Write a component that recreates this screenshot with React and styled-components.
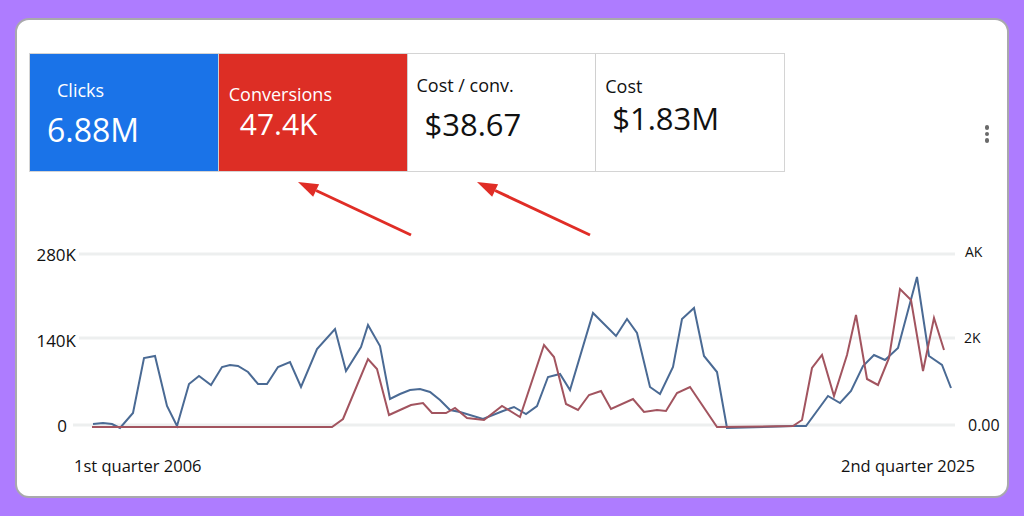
import React from "react"
import styled, { createGlobalStyle } from "styled-components"

const GlobalStyle = createGlobalStyle`
  html, body {
    margin: 0;
    padding: 0;
    background: #ae7cff;
  }
  body {
    font-family: "Open Sans", "Noto Sans", sans-serif;
    color: #111;
  }
`

const tiles = [
  { label: "Clicks", value: "6.88M", bg: "#1a73e8", fg: "#fff", labelTop: 24, labelLeft: 27, valueTop: 8, valueLeft: 17, valueSize: 32 },
  { label: "Conversions", value: "47.4K", bg: "#dd2e25", fg: "#fff", labelTop: 28, labelLeft: 10, valueTop: -2, valueLeft: 21, valueSize: 30 },
  { label: "Cost / conv.", value: "$38.67", bg: "#fff", fg: "#111", labelTop: 19, labelLeft: 9, valueTop: 7, valueLeft: 17, valueSize: 31 },
  { label: "Cost", value: "$1.83M", bg: "#fff", fg: "#111", labelTop: 20, labelLeft: 9, valueTop: 0, valueLeft: 16, valueSize: 31 },
]

const blue = "93,424 103,423 112,424 120,428 133,413 144,358 155,356 167,406 177,426 189,384 199,376 211,385 222,367 230,365 238,366 248,372 258,384 267,384 278,367 290,362 301,387 317,349 335,329 346,371 361,347 368,325 380,346 390,399 400,394 410,390 420,389 430,392 440,400 450,410 460,412 483,419 503,411 514,407 526,414 537,406 548,377 560,374 570,390 593,313 616,336 627,319 637,333 650,387 660,394 673,367 682,319 694,308 704,356 717,372 727,428 793,426 806,426 828,396 840,403 851,391 863,366 874,355 885,360 898,348 917,277 929,356 942,365 951,388"
const red = "92,427 332,427 343,419 368,359 377,369 389,415 400,410 411,405 423,403 432,413 446,413 455,408 467,418 484,420 502,406 520,417 544,345 554,357 566,404 578,410 589,395 601,391 611,409 633,399 644,412 657,410 666,411 677,393 690,387 717,427 793,426 802,420 812,368 822,355 834,396 847,355 856,315 867,379 878,385 889,358 900,289 911,300 923,371 934,318 944,350"

const gridLines = [
  { y: 254, x1: 79 },
  { y: 338, x1: 79 },
  { y: 425, x1: 73 },
]

const Page = styled.div`
  box-sizing: border-box;
  width: 1024px;
  height: 516px;
  padding: 18px 15px;
  overflow: hidden;
`

const Card = styled.div`
  position: relative;
  box-sizing: border-box;
  height: 480px;
  background: #fff;
  border: 2px solid #a9a9ad;
  border-radius: 14px;
`

const TopRow = styled.div`
  display: flex;
  align-items: center;
  justify-content: space-between;
  padding: 33px 18px 0 12px;
`

const Strip = styled.div`
  display: flex;
  width: 756px;
  height: 119px;
  box-sizing: border-box;
  border: 1px solid #d4d4d4;
`

const Tile = styled.div`
  flex: 1;
  box-sizing: border-box;
  background: ${p => p.$bg};
  color: ${p => p.$fg};
  & + & {
    border-left: 1px solid #d0d0d0;
  }
`

const Label = styled.div`
  margin: ${p => p.$top}px 0 0 ${p => p.$left}px;
  font-size: 18px;
  line-height: 24px;
`

const Value = styled.div`
  margin: ${p => p.$top}px 0 0 ${p => p.$left}px;
  font-size: ${p => p.$size}px;
  line-height: 40px;
`

const Kebab = styled.div`
  display: flex;
  flex-direction: column;
  gap: 2px;
  margin-top: 43px;
  span {
    width: 4.5px;
    height: 4.5px;
    border-radius: 50%;
    background: #6a6a6a;
  }
`

const Chart = styled.svg`
  display: block;
  margin-top: 18px;
  width: 990px;
  height: 300px;
  text {
    font-family: "Open Sans", "Noto Sans", sans-serif;
    fill: #111;
  }
`

const Notes = styled.svg`
  position: absolute;
  left: 0;
  top: 0;
  width: 990px;
  height: 240px;
  pointer-events: none;
`

const Arrow = ({ tipX, tipY, endX, endY }) => {
  const a = Math.atan2(endY - tipY, endX - tipX)
  const l = 20, w = 7
  const bx = tipX + Math.cos(a) * l, by = tipY + Math.sin(a) * l
  const nx = -Math.sin(a) * w, ny = Math.cos(a) * w
  return (
    <g>
      <line x1={ bx } y1={ by } x2={ endX } y2={ endY } stroke="#e02d26" strokeWidth="3"/>
      <polygon points={ `${ tipX },${ tipY } ${ bx + nx },${ by + ny } ${ bx - nx },${ by - ny }` } fill="#e02d26"/>
    </g>
  )
}

const App = () => {
  return (
    <Page>
      <GlobalStyle/>
      <Card>
        <TopRow>
          <Strip>
            { tiles.map(t => (
                <Tile key={ t.label } $bg={ t.bg } $fg={ t.fg }>
                  <Label $top={ t.labelTop } $left={ t.labelLeft }>{ t.label }</Label>
                  <Value $top={ t.valueTop } $left={ t.valueLeft } $size={ t.valueSize }>{ t.value }</Value>
                </Tile>
              ))
            }
          </Strip>
          <Kebab><span/><span/><span/></Kebab>
        </TopRow>

        <Chart viewBox="17 190 990 300">
          { gridLines.map(g => (
              <line key={ g.y } x1={ g.x1 } x2="955" y1={ g.y } y2={ g.y } stroke="#edefef" strokeWidth="3"/>
            ))
          }
          <polyline points={ blue } fill="none" stroke="#4a6a94" strokeWidth="2"/>
          <polyline points={ red } fill="none" stroke="#a2545f" strokeWidth="2"/>

          <text x="76" y="261" fontSize="17" textAnchor="end">280K</text>
          <text x="76" y="347" fontSize="17" textAnchor="end">140K</text>
          <text x="67" y="432" fontSize="17" textAnchor="end">0</text>
          <text x="965" y="257" fontSize="14">AK</text>
          <text x="964" y="343" fontSize="14">2K</text>
          <text x="968" y="431" fontSize="16">0.00</text>
          <text x="74" y="472" fontSize="16.5">1st quarter 2006</text>
          <text x="975" y="472" fontSize="16.5" textAnchor="end">2nd quarter 2025</text>
        </Chart>

        <Notes viewBox="17 20 990 240">
          <Arrow tipX={ 298 } tipY={ 182 } endX={ 411 } endY={ 235 }/>
          <Arrow tipX={ 477 } tipY={ 182 } endX={ 590 } endY={ 235 }/>
        </Notes>
      </Card>
    </Page>
  )
}
export default App
